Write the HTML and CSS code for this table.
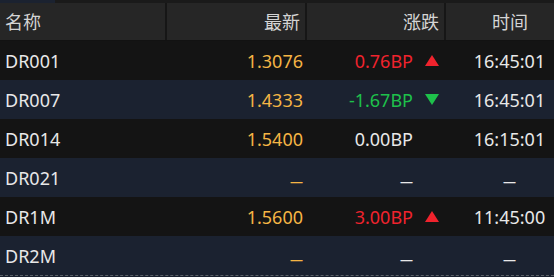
FILE: index.html
```html
<!DOCTYPE html>
<html lang="zh-CN">
<head>
<meta charset="utf-8">
<link rel="stylesheet" href="styles.css">
</head>
<body>
<div class="top-strip"></div>
<div class="table">
  <div class="row head">
    <div class="cell name">名称</div>
    <div class="cell price sep">最新</div>
    <div class="cell chg sep">涨跌</div>
    <div class="cell time sep">时间</div>
  </div>
  <div class="row dark">
    <div class="cell name">DR001</div>
    <div class="cell price num">1.3076</div>
    <div class="cell chg up">0.76BP<span class="arrow"><svg width="14" height="11" viewBox="0 0 14 11"><polygon points="7,0 14,11 0,11" fill="#f0232d"/></svg></span></div>
    <div class="cell time">16:45:01</div>
  </div>
  <div class="row navy">
    <div class="cell name">DR007</div>
    <div class="cell price num">1.4333</div>
    <div class="cell chg down">-1.67BP<span class="arrow"><svg width="14" height="11" viewBox="0 0 14 11"><polygon points="0,0 14,0 7,11" fill="#1ec14b"/></svg></span></div>
    <div class="cell time">16:45:01</div>
  </div>
  <div class="row dark">
    <div class="cell name">DR014</div>
    <div class="cell price num">1.5400</div>
    <div class="cell chg">0.00BP<span class="arrow"></span></div>
    <div class="cell time">16:15:01</div>
  </div>
  <div class="row navy">
    <div class="cell name">DR021</div>
    <div class="cell price num"><span class="dash">—</span></div>
    <div class="cell chg"><span class="dash">—</span><span class="arrow"></span></div>
    <div class="cell time"><span class="dash">—</span></div>
  </div>
  <div class="row dark">
    <div class="cell name">DR1M</div>
    <div class="cell price num">1.5600</div>
    <div class="cell chg up">3.00BP<span class="arrow"><svg width="14" height="11" viewBox="0 0 14 11"><polygon points="7,0 14,11 0,11" fill="#f0232d"/></svg></span></div>
    <div class="cell time">11:45:00</div>
  </div>
  <div class="row navy last">
    <div class="cell name">DR2M</div>
    <div class="cell price num"><span class="dash">—</span></div>
    <div class="cell chg"><span class="dash">—</span><span class="arrow"></span></div>
    <div class="cell time"><span class="dash">—</span></div>
  </div>
</div>
</body>
</html>
```
FILE: styles.css
```css
html, body {
  margin: 0;
  padding: 0;
  background: #1b2230;
  overflow: hidden;
}
body {
  width: 554px;
  height: 277px;
  font-family: "Noto Sans", "Noto Sans CJK SC", sans-serif;
  font-size: 18px;
  color: #e8e8e8;
}
.top-strip {
  height: 3px;
  background: linear-gradient(to right, #1b2230 0, #1b2230 55px, #1a1a1a 55px);
}
.table {
  display: flex;
  flex-direction: column;
}
.row {
  display: grid;
  grid-template-columns: 166px 140px 139px 109px;
  height: 39px;
  align-items: stretch;
}
.row.head {
  height: 37px;
  background: #262626;
  border-bottom: 1px solid #121212;
  color: #d4d4d4;
}
.cell {
  display: flex;
  align-items: center;
  white-space: nowrap;
  line-height: 1;
}
.sep {
  border-left: 2px solid #161616;
  margin-left: -1px;
}
.dark { background: #141414; }
.navy { background: #1b2230; }
.last {
  border-bottom: 1px dashed #5a5f66;
}
.name {
  padding-left: 5px;
}
.price {
  justify-content: flex-end;
  padding-right: 3px;
}
.row.head .price,
.row.head .chg {
  padding-right: 6px;
}
.num { color: #f5b545; }
.chg {
  justify-content: flex-end;
  padding-right: 6px;
}
.up { color: #f0232d; }
.down { color: #1ec14b; }
.arrow {
  display: inline-flex;
  width: 14px;
  height: 11px;
  margin-left: 12px;
}
.time {
  justify-content: center;
  padding-left: 20px;
}
.dash {
  display: inline-block;
  font-size: 13px;
  font-weight: 700;
  line-height: 1;
  transform: translateY(4px);
}
```
